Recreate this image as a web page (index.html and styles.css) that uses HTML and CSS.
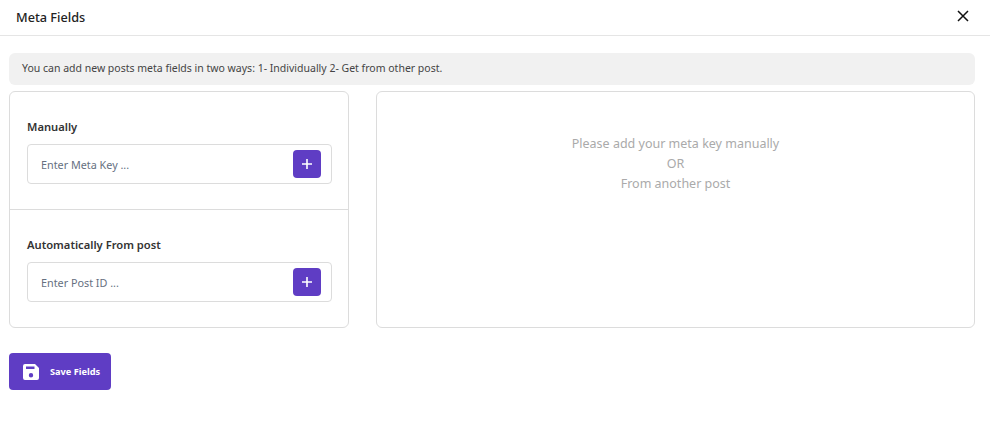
FILE: index.html
```html
<!DOCTYPE html>
<html lang="en">
<head>
<meta charset="utf-8">
<title>Meta Fields</title>
<link rel="stylesheet" href="styles.css">
</head>
<body>
<header class="head">
  <h1 class="title">Meta Fields</h1>
  <button class="close" aria-label="Close">
    <svg width="12" height="12" viewBox="0 0 12 12"><path d="M1 1l10 10M11 1L1 11" stroke="#111" stroke-width="1.5" fill="none"/></svg>
  </button>
</header>
<main class="body">
  <p class="note">You can add new posts meta fields in two ways: 1- Individually 2- Get from other post.</p>
  <div class="cols">
    <section class="card side">
      <div class="block">
        <label class="label">Manually</label>
        <div class="field">
          <span class="placeholder">Enter Meta Key ...</span>
          <span class="add"><svg width="10" height="10" viewBox="0 0 10 10"><path d="M5 0v10M0 5h10" stroke="#fff" stroke-width="1.6"/></svg></span>
        </div>
      </div>
      <div class="block second">
        <label class="label">Automatically From post</label>
        <div class="field">
          <span class="placeholder">Enter Post ID ...</span>
          <span class="add"><svg width="10" height="10" viewBox="0 0 10 10"><path d="M5 0v10M0 5h10" stroke="#fff" stroke-width="1.6"/></svg></span>
        </div>
      </div>
    </section>
    <section class="card result">
      <p>Please add your meta key manually</p>
      <p>OR</p>
      <p>From another post</p>
    </section>
  </div>
  <button class="save">
    <svg width="16" height="16" viewBox="0 0 16 16"><path fill-rule="evenodd" fill="#fff" d="M2 0h10l4 4v10a2 2 0 0 1-2 2H2a2 2 0 0 1-2-2V2a2 2 0 0 1 2-2zM3 2.500v2.500h8.500V2.500zM8 9a2.200 2.200 0 1 0 0 4.400 2.200 2.200 0 0 0 0-4.400z"/></svg>
    <span>Save Fields</span>
  </button>
</main>
</body>
</html>
```
FILE: styles.css
```css
* { box-sizing: border-box; }
html, body { margin: 0; padding: 0; background: #fff; }
body { font-family: "Noto Sans", sans-serif; color: #333; height: 431px; overflow: hidden; }
.head { height: 36px; border-bottom: 1px solid #e5e5e5; display: flex; align-items: center; justify-content: space-between; padding: 0 21px 2px 16px; }
.title { margin: 0; font-size: 12.700px; font-weight: 500; color: #222; }
.close { border: 0; background: none; padding: 0; margin-bottom: 2px; display: flex; }
.body { padding: 17px 15px 0 9px; }
.note { margin: 0; height: 32px; line-height: 31px; background: #f1f1f1; border-radius: 6px; padding: 0 13px; font-size: 10.500px; color: #444; }
.cols { display: flex; gap: 27px; margin-top: 6px; }
.card { border: 1px solid #dcdcdc; border-radius: 6px; height: 237px; }
.side { width: 340px; flex: none; display: flex; flex-direction: column; }
.block { padding: 25px 16px 0 17px; height: 117px; }
.second { border-top: 1px solid #dcdcdc; height: 118px; }
.label { display: block; font-size: 11.200px; font-weight: 600; color: #333; line-height: 20px; margin-bottom: 7px; }
.field { height: 40px; border: 1px solid #dcdcdc; border-radius: 4px; display: flex; align-items: center; justify-content: space-between; padding: 0 10px 0 13px; }
.placeholder { font-size: 10.800px; color: #66707f; }
.add { width: 28px; height: 28px; background: #5f3dc4; border-radius: 4px; display: flex; align-items: center; justify-content: center; }
.result { flex: 1; padding-top: 42px; text-align: center; color: #aaa; font-size: 12.500px; line-height: 20px; }
.result p { margin: 0; }
.save { margin-top: 25px; width: 102px; height: 37px; background: #5f3dc4; border: 0; border-radius: 4px; display: flex; align-items: center; gap: 11px; padding: 0 0 0 14px; color: #fff; font-family: inherit; font-size: 9.200px; font-weight: 700; }
```
